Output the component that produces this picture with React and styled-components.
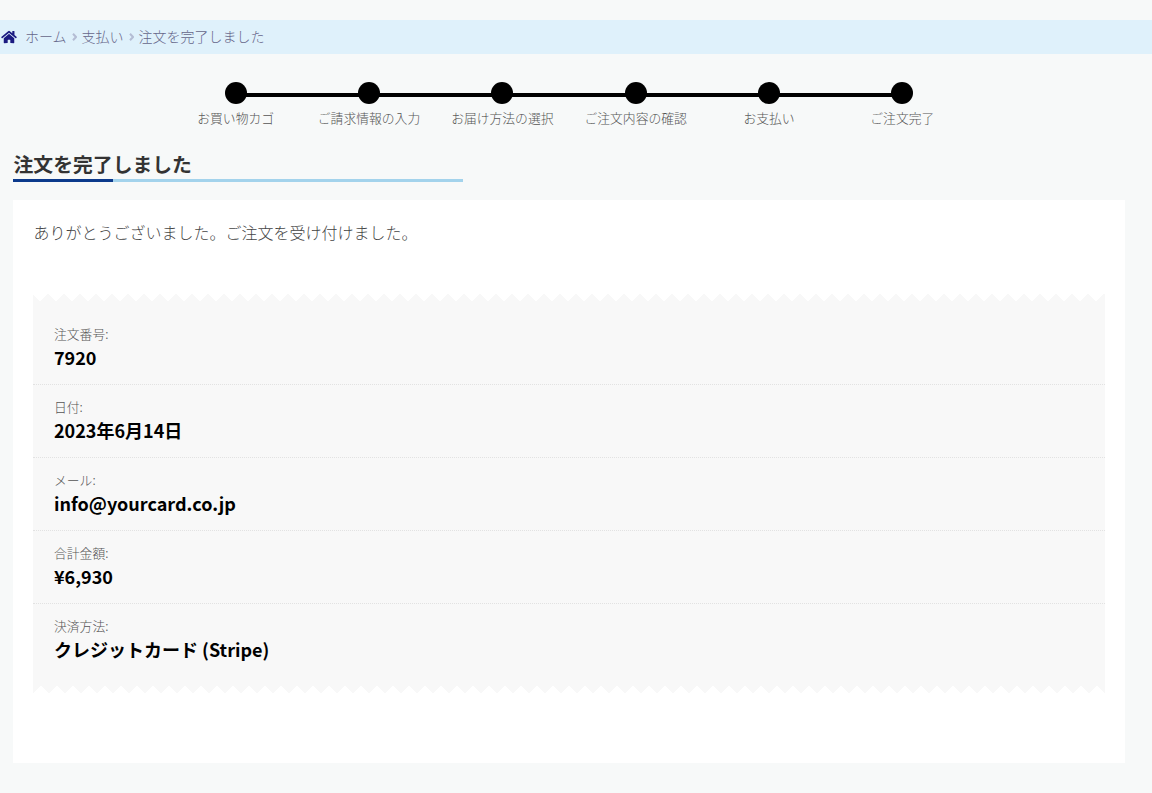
import React from "react";
import styled, { createGlobalStyle } from "styled-components";

const Global = createGlobalStyle`
  html, body { margin: 0; padding: 0; background: #f7f9f9; }
  body { font-family: "Noto Sans CJK JP", "Noto Sans", sans-serif; overflow: hidden; }
`;
const Page = styled.div`
  width: 1152px;
  height: 793px;
  padding-top: 20px;
  box-sizing: border-box;
`;
const Crumbs = styled.nav`
  height: 34px;
  box-sizing: border-box;
  padding: 0 0 3px 1px;
  background: #dff1fb;
  display: flex;
  align-items: center;
  font-size: 14px;
  font-weight: 300;
  color: #66668a;
`;
const HomeIcon = styled.svg`
  width: 16px;
  height: 14px;
  margin: 3px 8px 0 0;
  fill: #1a1a80;
`;
const Sep = styled.svg`
  width: 5px;
  height: 8px;
  margin: 2px 5px 0 5px;
  fill: none;
  stroke: #b4bdd4;
  stroke-width: 2;
`;
const Steps = styled.ol`
  list-style: none;
  margin: 28px 0 0 169px;
  padding: 0;
  display: flex;
  width: 800px;
`;
const Step = styled.li`
  flex: 0 0 133.33px;
  position: relative;
  display: flex;
  flex-direction: column;
  align-items: center;
  font-size: 12.8px;
  font-weight: 300;
  color: #555;
  line-height: 18px;
  white-space: nowrap;
  &::before {
    content: "";
    width: 22px;
    height: 22px;
    border-radius: 50%;
    background: #000;
    margin-bottom: 5px;
    position: relative;
    z-index: 1;
  }
  &:not(:last-child)::after {
    content: "";
    position: absolute;
    top: 11px;
    left: 50%;
    width: 100%;
    height: 4px;
    background: #000;
  }
`;
const Title = styled.h1`
  position: relative;
  margin: 22px 0 0 13px;
  width: 449.5px;
  height: 30px;
  padding-left: 0.5px;
  border-bottom: 3px solid #a3d3ec;
  font-size: 19.84px;
  font-weight: 700;
  line-height: 30px;
  color: #333;
  &::after {
    content: "";
    position: absolute;
    left: 0;
    bottom: -3px;
    width: 100px;
    height: 3px;
    background: #0c3a8c;
  }
`;
const Card = styled.main`
  margin: 18px 0 0 13px;
  width: 1112px;
  height: 563px;
  box-sizing: border-box;
  background: #fff;
  padding: 20px;
`;
const Thanks = styled.p`
  margin: 0;
  padding-left: 0.5px;
  font-size: 16px;
  font-weight: 300;
  line-height: 24px;
  color: #444;
`;
const Receipt = styled.ul`
  list-style: none;
  margin: 50px 0 0;
  padding: 18px 0 0;
  background: #f8f8f8;
  position: relative;
  height: 399px;
  box-sizing: border-box;
  &::before, &::after {
    content: "";
    position: absolute;
    left: 0;
    right: 0;
    height: 8px;
    background-size: 16px 8px;
    background-repeat: repeat-x;
  }
  &::before {
    top: 0;
    background-position: 7px 0;
    background-image: linear-gradient(135deg, #fff 5.3px, transparent 5.3px), linear-gradient(225deg, #fff 5.3px, transparent 5.3px);
  }
  &::after {
    bottom: 0;
    background-position: 8px 0;
    background-image: linear-gradient(45deg, #fff 5.3px, transparent 5.3px), linear-gradient(-45deg, #fff 5.3px, transparent 5.3px);
  }
`;
const Row = styled.li`
  height: 73px;
  box-sizing: border-box;
  padding: 15px 21px 0;
  border-bottom: 1px dotted #e2e2e2;
  &:last-child { border-bottom: 0; }
`;
const Label = styled.div`
  font-size: 12.8px;
  font-weight: 300;
  line-height: 14px;
  color: #555;
`;
const Value = styled.div`
  margin-top: 3px;
  font-size: 18px;
  font-weight: 700;
  line-height: 26px;
  color: #000;
`;
const steps = ["お買い物カゴ", "ご請求情報の入力", "お届け方法の選択", "ご注文内容の確認", "お支払い", "ご注文完了"];
const rows = [
  ["注文番号:", "7920"],
  ["日付:", "2023年6月14日"],
  ["メール:", "info@yourcard.co.jp"],
  ["合計金額:", "¥6,930"],
  ["決済方法:", "クレジットカード (Stripe)"],
];
const Chevron = () => (
  <Sep viewBox="0 0 5 8"><path d="M1 .8 4 4 1 7.2" /></Sep>
);
export default function App() {
  return (
    <Page>
      <Global />
      <Crumbs>
        <HomeIcon viewBox="0 0 576 512">
          <path d="M280.4 148.3 96 300.1V464a16 16 0 0 0 16 16l112-.3a16 16 0 0 0 16-16V368a16 16 0 0 1 16-16h64a16 16 0 0 1 16 16v95.6a16 16 0 0 0 16 16l112 .4a16 16 0 0 0 16-16V300L295.700 148.300a12.200 12.200 0 0 0-15.300 0zM571.600 251.500 488 182.600V44.100a12 12 0 0 0-12-12h-56a12 12 0 0 0-12 12v72.600L318.500 43a48 48 0 0 0-61 0L4.300 251.500a12 12 0 0 0-1.600 16.900l25.500 31A12 12 0 0 0 45.200 301l235.200-193.700a12.200 12.200 0 0 1 15.300 0L530.900 301a12 12 0 0 0 16.900-1.600l25.500-31a12 12 0 0 0-1.700-16.900z" />
        </HomeIcon>
        <span>ホーム</span><Chevron /><span>支払い</span><Chevron /><span>注文を完了しました</span>
      </Crumbs>
      <Steps>{steps.map((s) => <Step key={s}>{s}</Step>)}</Steps>
      <Title>注文を完了しました</Title>
      <Card>
        <Thanks>ありがとうございました。ご注文を受け付けました。</Thanks>
        <Receipt>
          {rows.map(([l, v]) => (
            <Row key={l}><Label>{l}</Label><Value>{v}</Value></Row>
          ))}
        </Receipt>
      </Card>
    </Page>
  );
}
